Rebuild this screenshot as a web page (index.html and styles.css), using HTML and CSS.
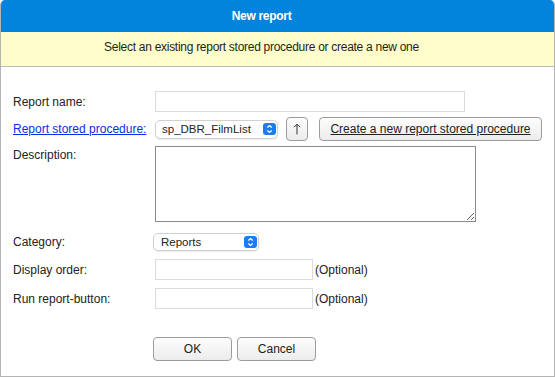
FILE: index.html
```html
<!DOCTYPE html>
<html lang="en">
  <head>
    <meta charset="UTF-8" />
    <title>New report</title>
    <link rel="stylesheet" href="styles.css">
  </head>
  <body>
    <div class="dialog">
      <div class="dialog-title">New report</div>
      <div class="dialog-info">Select an existing report stored procedure or create a new one</div>

      <form class="report-form" onsubmit="return false">
        <div class="row">
          <label class="label" for="report-name">Report name:</label>
          <input type="text" id="report-name" class="text-input wide" />
        </div>

        <div class="row row-proc">
          <a href="#" class="label link">Report stored procedure:</a>
          <div class="select-wrap proc-select">
            <select id="proc">
              <option>sp_DBR_FilmList</option>
            </select>
            <svg class="knob" width="13" height="12" viewBox="0 0 13 12">
              <rect width="13" height="12" rx="3" fill="#1b7cf4" />
              <path d="M4.3 4.6 L6.5 2.6 L8.7 4.6 M4.3 7.4 L6.5 9.4 L8.7 7.4" stroke="#fff" stroke-width="1.3" fill="none" />
            </svg>
          </div>
          <button type="button" class="btn btn-up" title="Up">
            <svg width="8" height="12" viewBox="0 0 8 12">
              <path d="M4 11.5 V1.2 M1 4.2 L4 1.2 L7 4.2" stroke="#333" stroke-width="1" fill="none" />
            </svg>
          </button>
          <button type="button" class="btn btn-create">Create a new report stored procedure</button>
        </div>

        <div class="row row-desc">
          <label class="label" for="description">Description:</label>
          <textarea id="description"></textarea>
        </div>

        <div class="row row-cat">
          <label class="label" for="category">Category:</label>
          <div class="select-wrap cat-select">
            <select id="category">
              <option>Reports</option>
            </select>
            <svg class="knob" width="13" height="12" viewBox="0 0 13 12">
              <rect width="13" height="12" rx="3" fill="#1b7cf4" />
              <path d="M4.3 4.6 L6.5 2.6 L8.7 4.6 M4.3 7.4 L6.5 9.4 L8.7 7.4" stroke="#fff" stroke-width="1.3" fill="none" />
            </svg>
          </div>
        </div>

        <div class="row row-opt">
          <label class="label" for="display-order">Display order:</label>
          <input type="text" id="display-order" class="text-input short" />
          <span class="optional">(Optional)</span>
        </div>

        <div class="row row-opt">
          <label class="label" for="run-button">Run report-button:</label>
          <input type="text" id="run-button" class="text-input short" />
          <span class="optional">(Optional)</span>
        </div>

        <div class="actions">
          <button type="submit" class="btn btn-action">OK</button>
          <button type="button" class="btn btn-action">Cancel</button>
        </div>
      </form>
    </div>
  </body>
</html>
```

FILE: styles.css
```css
body {
  margin: 0;
  font-family: "Liberation Sans", Arial, sans-serif;
  font-size: 12px;
  color: #222;
  background-color: #fff;
}
.dialog {
  box-sizing: border-box;
  width: 555px;
  height: 377px;
  border: 1px solid #b4b4b4;
  border-top: none;
  border-radius: 5px 5px 0 0;
  overflow: hidden;
}
.dialog-title {
  height: 32px;
  line-height: 32px;
  text-align: center;
  color: #fff;
  font-weight: bold;
  letter-spacing: -0.3px;
  background-color: #0384dc;
  margin: 0 -1px;
  padding-right: 32px;
}
.dialog-info {
  height: 34px;
  line-height: 31px;
  text-align: center;
  color: #1e1e1e;
  letter-spacing: -0.28px;
  background-color: #fefdcb;
  border-bottom: 1px solid #bdbdbd;
  padding-right: 32px;
}
.report-form {
  padding: 24px 0 0 12px;
}
.row {
  display: flex;
  align-items: center;
  height: 21px;
}
.label {
  width: 142px;
  flex-shrink: 0;
}
.link {
  color: #0a2fe0;
  text-decoration: underline;
}
.text-input {
  box-sizing: border-box;
  height: 21px;
  border: 1px solid #dcdcdc;
  padding: 2px 4px;
  font: inherit;
}
.wide {
  width: 310px;
}
.short {
  width: 158px;
}
.optional {
  margin-left: 2px;
}
.row-proc {
  height: 24px;
  margin-top: 5px;
}
.select-wrap {
  position: relative;
  height: 19px;
}
.select-wrap select {
  appearance: none;
  -webkit-appearance: none;
  box-sizing: border-box;
  height: 19px;
  width: 100%;
  border: 1px solid #d0d0d0;
  border-radius: 5px;
  background: #fff;
  box-shadow: 0 1px 1px rgba(0, 0, 0, 0.08);
  font: inherit;
  font-size: 11.5px;
  color: #222;
  padding: 0 0 0 6px;
}
.select-wrap .knob {
  position: absolute;
  right: 2px;
  top: 3px;
}
.proc-select {
  width: 123px;
}
.btn {
  box-sizing: border-box;
  height: 24px;
  border: 1px solid #9c9c9c;
  border-radius: 4px;
  background: linear-gradient(#fdfdfd, #ececec);
  font: inherit;
  color: #222;
  padding: 0;
  cursor: pointer;
}
.btn-up {
  width: 22px;
  margin-left: 8px;
  display: flex;
  align-items: center;
  justify-content: center;
}
.btn-create {
  width: 223px;
  margin-left: 11px;
  text-decoration: underline;
}
.row-desc {
  height: auto;
  align-items: flex-start;
  margin-top: 5px;
}
.row-desc .label {
  padding-top: 2px;
}
textarea {
  box-sizing: border-box;
  width: 321px;
  height: 76px;
  border: 1px solid #8a8a8a;
  font: inherit;
  margin: 0;
}
.row-cat {
  height: 20px;
  margin-top: 10px;
}
.row-cat .label {
  width: 140px;
}
.cat-select {
  width: 106px;
  height: 18px;
}
.cat-select select {
  height: 18px;
  padding-left: 7px;
}
.cat-select .knob {
  top: 3px;
}
.row-opt {
  margin-top: 7px;
}
.row-opt + .row-opt {
  margin-top: 8px;
}
.actions {
  display: flex;
  gap: 5px;
  margin: 28px 0 0 140px;
}
.btn-action {
  width: 79px;
}
```
